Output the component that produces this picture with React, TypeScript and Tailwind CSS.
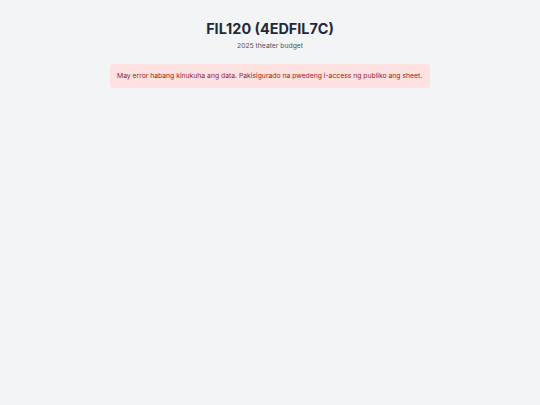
export default function App() {
  return (
    <div className="min-h-screen bg-[#f3f4f6] font-['Inter',sans-serif]">
      <div className="mx-auto w-[320px] pt-[20px]">
        <header className="text-center">
          <h1 className="text-[14.4px] font-bold leading-[18px] text-[#1f2937]">FIL120 (4EDFIL7C)</h1>
          <p className="mt-[3px] text-[6.8px] leading-[9px] text-[#4b5563]">2025 theater budget</p>
        </header>
        <div className="mt-[14px] rounded-[4px] bg-[#fee2e2] px-[7px] py-[7px] text-[6.8px] leading-[10px] text-[#991b1b]">
          May error habang kinukuha ang data. Pakisigurado na pwedeng i-access ng publiko ang sheet.
        </div>
      </div>
    </div>
  );
}
